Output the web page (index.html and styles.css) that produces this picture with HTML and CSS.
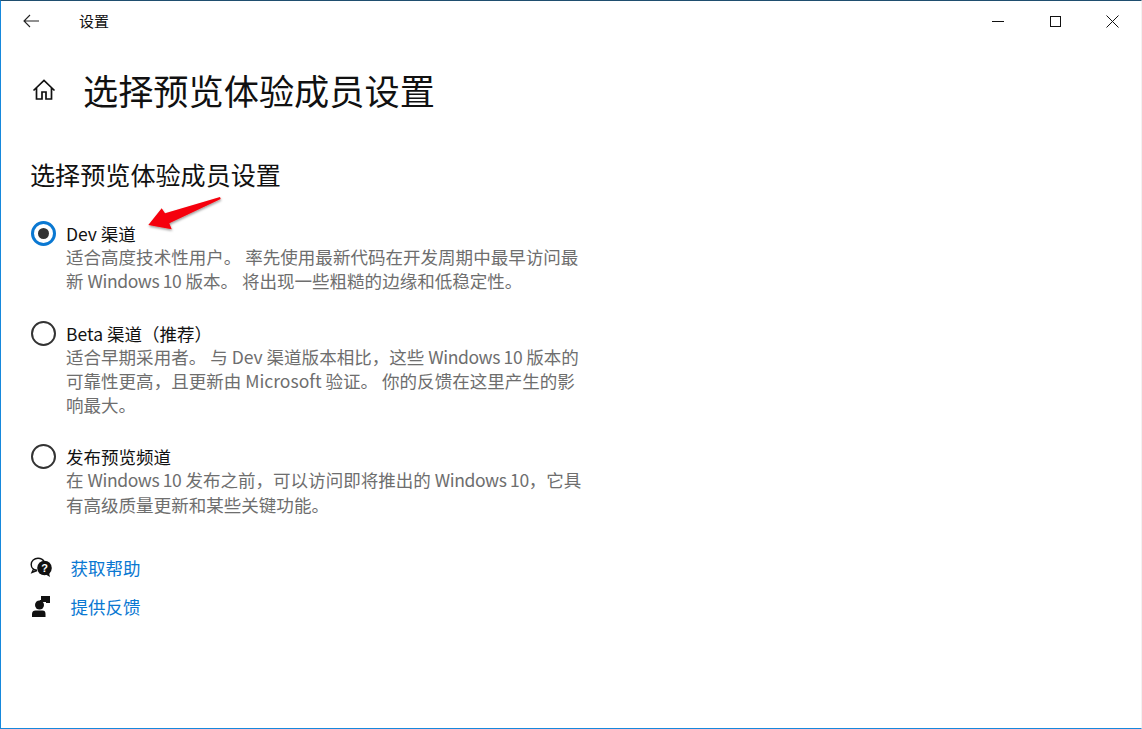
FILE: index.html
```html
<!DOCTYPE html>
<html lang="zh-CN">
<head>
<meta charset="utf-8">
<title>设置</title>
<link rel="stylesheet" href="styles.css">
</head>
<body>
<div class="window">
  <header class="titlebar">
    <svg class="back" width="18" height="14" viewBox="0 0 18 14"><path d="M8 1 2 7l6 6M2 7h15" fill="none" stroke="#222" stroke-width="1.1"/></svg>
    <span class="apptitle">设置</span>
    <div class="controls">
      <svg width="13" height="13" viewBox="0 0 13 13"><path d="M0 6.500h12" stroke="#111" stroke-width="1"/></svg>
      <svg width="13" height="13" viewBox="0 0 13 13"><rect x="1.500" y="1.500" width="10" height="10" fill="none" stroke="#111" stroke-width="1"/></svg>
      <svg width="13" height="13" viewBox="0 0 13 13"><path d="M.5.5l12 12M12.500.5l-12 12" stroke="#111" stroke-width="1"/></svg>
    </div>
  </header>
  <main class="content">
    <div class="pagehead">
      <svg class="home" width="24" height="24" viewBox="0 0 24 24"><path d="M1.500 12.500 12 2.500l10.500 10M4.500 10v11h5.500v-7h4v7h5.500V10" fill="none" stroke="#111" stroke-width="1.700"/></svg>
      <h1>选择预览体验成员设置</h1>
    </div>
    <h2>选择预览体验成员设置</h2>
    <div class="option">
      <span class="radio checked"></span>
      <div class="optiontext">
        <div class="label">Dev 渠道</div>
        <p>适合高度技术性用户。 率先使用最新代码在开发周期中最早访问最<br>新 <span class="en">Windows 10</span> 版本。 将出现一些粗糙的边缘和低稳定性。</p>
      </div>
    </div>
    <div class="option">
      <span class="radio"></span>
      <div class="optiontext">
        <div class="label">Beta 渠道（推荐）</div>
        <p>适合早期采用者。 与 Dev 渠道版本相比，这些 <span class="en">Windows 10</span> 版本的<br>可靠性更高，且更新由 Microsoft 验证。 你的反馈在这里产生的影<br>响最大。</p>
      </div>
    </div>
    <div class="option">
      <span class="radio"></span>
      <div class="optiontext">
        <div class="label">发布预览频道</div>
        <p>在 <span class="en">Windows 10</span> 发布之前，可以访问即将推出的 <span class="en">Windows 10</span>，它具<br>有高级质量更新和某些关键功能。</p>
      </div>
    </div>
    <div class="links">
      <a class="link">
        <svg width="24" height="22" viewBox="0 0 24 22"><path d="M7 13.200C3.500 13 1.200 10.500 1.200 7.500 1.200 3.800 4.300 1.200 8 1.200c2.700 0 5 1.200 6 3.300M3.800 11.500 2 15.500l5-2" fill="none" stroke="#111" stroke-width="1.400"/><circle cx="14.500" cy="11" r="7.300" fill="#111"/><path d="M15 17l5 3-1.500-6z" fill="#111"/><text x="14.500" y="15" text-anchor="middle" class="qmark">?</text></svg>
        <span>获取帮助</span>
      </a>
      <a class="link">
        <svg width="24" height="22" viewBox="0 0 24 22"><circle cx="9.500" cy="9" r="4.500" fill="#111"/><path d="M2 21v-3c0-2.500 1.500-3.500 3.500-3.500h7c2 0 3 1 3 3.500v3z" fill="#111"/><path d="M11 0h9v7h-4V6h-5l-2 1.500L10 4h1z" fill="#111"/></svg>
        <span>提供反馈</span>
      </a>
    </div>
  </main>
  <svg class="arrow" width="84" height="44" viewBox="0 0 84 44">
    <defs><filter id="s" x="-20%" y="-20%" width="140%" height="160%"><feDropShadow dx="0.500" dy="1.500" stdDeviation="1.200" flood-color="#000" flood-opacity=".4"/></filter></defs>
    <path d="M74 4l.700 2-51.400 24.300 2.400 6L2.300 32 15.700 15.300l3.300 5z" fill="#f5000a" filter="url(#s)"/>
  </svg>
</div>
</body>
</html>
```
FILE: styles.css
```css
* { box-sizing: border-box; }
html, body { margin: 0; padding: 0; }
body {
  width: 1142px;
  height: 729px;
  overflow: hidden;
  background: #fff;
  font-family: "Noto Sans CJK SC", "Noto Sans", sans-serif;
  color: #111;
}
.window {
  position: relative;
  width: 1142px;
  height: 729px;
  background: #fff;
  border: 1px solid #1688dc;
  border-top-color: #1f4e6f;
  border-right-color: #f2f2f2;
}
.titlebar {
  display: flex;
  align-items: center;
  height: 40px;
  padding-left: 21px;
}
.back { margin-right: 39px; }
.apptitle { font-size: 15px; line-height: 40px; }
.controls {
  margin-left: auto;
  display: flex;
  gap: 44px;
  padding-right: 22px;
}
.content { padding-left: 29px; }
.pagehead {
  display: flex;
  align-items: center;
  height: 60px;
  margin-top: 19px;
}
.home { margin-left: 2px; margin-right: 27px; flex: none; }
h1 {
  margin: 0;
  font-size: 35.200px;
  font-weight: 400;
  line-height: 60px;
  white-space: nowrap;
}
h2 {
  margin: 34px 0 0;
  font-size: 25.100px;
  font-weight: 400;
  line-height: 40px;
}
.option { display: flex; margin-top: 27px; }
.option + .option { margin-top: 27px; }
.radio {
  flex: none;
  width: 25px;
  height: 25px;
  margin-left: 1px;
  margin-right: 10px;
  border: 2px solid #333;
  border-radius: 50%;
  display: flex;
  align-items: center;
  justify-content: center;
}
.radio.checked { border: 3px solid #0a78d2; }
.radio.checked::after {
  content: "";
  width: 11px;
  height: 11px;
  border-radius: 50%;
  background: #333;
}
.label { font-size: 17.500px; line-height: 23px; padding-top: 1px; }
.optiontext p {
  margin: 0;
  font-size: 17.550px;
  line-height: 24.300px;
  color: #6e6e6e;
  white-space: nowrap;
}
.en { letter-spacing: -0.4px; }
.links { margin-top: 38px; display: flex; flex-direction: column; gap: 14px; }
.link {
  display: flex;
  align-items: center;
  height: 25px;
  color: #0a78d2;
  font-size: 17.500px;
}
.link svg { flex: none; margin-right: 16.500px; }
.qmark { font: 700 11px "Liberation Sans", sans-serif; fill: #fff; }
.arrow { position: absolute; left: 145px; top: 192px; }
```
